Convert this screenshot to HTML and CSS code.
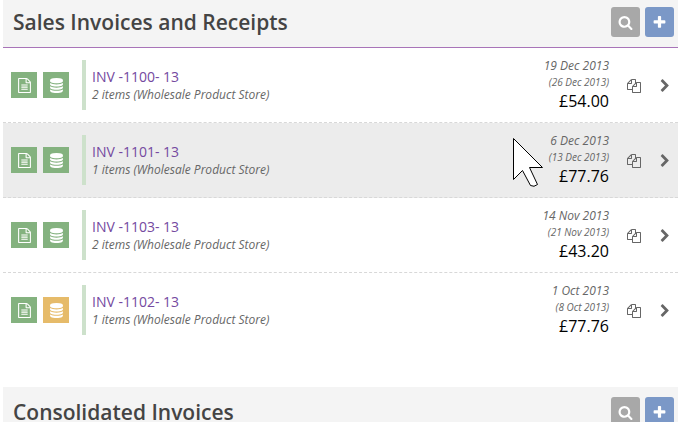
FILE: index.html
```html
<!DOCTYPE html>
<html lang="en">
<head>
  <meta charset="UTF-8" />
  <meta name="viewport" content="width=device-width, initial-scale=1.0"/>
  <title>Sales Invoices and Receipts</title>
  <link rel="stylesheet" href="styles.css">
</head>
<body>

  <!-- icon set -->
  <svg class="icon-defs" aria-hidden="true">
    <symbol id="i-file" viewBox="0 0 1792 1792"><path d="M1596 380q28 28 48 76t20 88v1152q0 40-28 68t-68 28h-1344q-40 0-68-28t-28-68v-1600q0-40 28-68t68-28h896q40 0 88 20t76 48zm-444-244v376h376q-10-29-22-41l-313-313q-12-12-41-22zm384 1528v-1024h-416q-40 0-68-28t-28-68v-416h-768v1536h1280zm-1024-864q0-14 9-23t23-9h704q14 0 23 9t9 23v64q0 14-9 23t-23 9h-704q-14 0-23-9t-9-23v-64zm736 224q14 0 23 9t9 23v64q0 14-9 23t-23 9h-704q-14 0-23-9t-9-23v-64q0-14 9-23t23-9h704zm0 256q14 0 23 9t9 23v64q0 14-9 23t-23 9h-704q-14 0-23-9t-9-23v-64q0-14 9-23t23-9h704z"/></symbol>
    <symbol id="i-coins" viewBox="0 0 1792 1792"><path d="M896 768q237 0 443-43t325-127v170q0 69-103 128t-280 93.5-385 34.5-385-34.5-280-93.5-103-128v-170q119 84 325 127t443 43zm0 768q237 0 443-43t325-127v170q0 69-103 128t-280 93.5-385 34.5-385-34.5-280-93.5-103-128v-170q119 84 325 127t443 43zm0-384q237 0 443-43t325-127v170q0 69-103 128t-280 93.5-385 34.5-385-34.5-280-93.5-103-128v-170q119 84 325 127t443 43zm0-1152q208 0 385 34.5t280 93.5 103 128v128q0 69-103 128t-280 93.5-385 34.5-385-34.5-280-93.5-103-128v-128q0-69 103-128t280-93.5 385-34.5z"/></symbol>
    <symbol id="i-copy" viewBox="0 0 1792 1792"><path d="M1696 384q40 0 68 28t28 68v1216q0 40-28 68t-68 28h-960q-40 0-68-28t-28-68v-288h-544q-40 0-68-28t-28-68v-672q0-40 20-88t48-76l408-408q28-28 76-48t88-20h416q40 0 68 28t28 68v328q68-40 128-40h416zm-544 213l-299 299h299v-299zm-640-384l-299 299h299v-299zm196 647l316-316v-416h-384v416q0 40-28 68t-68 28h-416v640h512v-256q0-40 20-88t48-76zm956 804v-1152h-384v416q0 40-28 68t-68 28h-416v640h896z"/></symbol>
    <symbol id="i-next" viewBox="0 0 1792 1792"><path d="M1363 877l-742 742q-19 19-45 19t-45-19l-166-166q-19-19-19-45t19-45l531-531-531-531q-19-19-19-45t19-45l166-166q19-19 45-19t45 19l742 742q19 19 19 45t-19 45z"/></symbol>
    <symbol id="i-search" viewBox="0 0 1792 1792"><path d="M1216 832q0-185-131.5-316.5t-316.5-131.5-316.5 131.5-131.5 316.5 131.5 316.5 316.5 131.5 316.5-131.5 131.5-316.5zm512 832q0 52-38 90t-90 38q-54 0-90-38l-343-342q-179 124-399 124-143 0-273.5-55.5t-225-150-150-225-55.5-273.5 55.5-273.5 150-225 225-150 273.5-55.5 273.5 55.5 225 150 150 225 55.5 273.5q0 220-124 399l343 343q37 37 37 90z"/></symbol>
    <symbol id="i-plus" viewBox="0 0 1792 1792"><path d="M1600 736v192q0 40-28 68t-68 28h-416v416q0 40-28 68t-68 28h-192q-40 0-68-28t-28-68v-416h-416q-40 0-68-28t-28-68v-192q0-40 28-68t68-28h416v-416q0-40 28-68t68-28h192q40 0 68 28t28 68v416h416q40 0 68 28t28 68z"/></symbol>
  </svg>

  <main class="page">
    <section class="panel">
      <header class="panel-head">
        <h2>Sales Invoices and Receipts</h2>
        <button class="btn search" aria-label="Search"><svg class="icon"><use href="#i-search"/></svg></button>
        <button class="btn add" aria-label="Add"><svg class="icon"><use href="#i-plus"/></svg></button>
      </header>

      <ul class="invoices">
        <li class="invoice">
          <span class="status"><svg class="icon"><use href="#i-file"/></svg></span>
          <span class="status"><svg class="icon"><use href="#i-coins"/></svg></span>
          <div class="info">
            <a href="#">INV -1100- 13</a>
            <span class="items">2 items (Wholesale Product Store)</span>
          </div>
          <div class="totals">
            <span class="date">19 Dec 2013</span>
            <span class="due">(26 Dec 2013)</span>
            <span class="amount">£54.00</span>
          </div>
          <button class="tool" aria-label="Copy"><svg class="icon"><use href="#i-copy"/></svg></button>
          <button class="tool" aria-label="Open"><svg class="icon"><use href="#i-next"/></svg></button>
        </li>
        <li class="invoice active">
          <span class="status"><svg class="icon"><use href="#i-file"/></svg></span>
          <span class="status"><svg class="icon"><use href="#i-coins"/></svg></span>
          <div class="info">
            <a href="#">INV -1101- 13</a>
            <span class="items">1 items (Wholesale Product Store)</span>
          </div>
          <div class="totals">
            <span class="date">6 Dec 2013</span>
            <span class="due">(13 Dec 2013)</span>
            <span class="amount">£77.76</span>
          </div>
          <button class="tool" aria-label="Copy"><svg class="icon"><use href="#i-copy"/></svg></button>
          <button class="tool" aria-label="Open"><svg class="icon"><use href="#i-next"/></svg></button>
          <svg class="pointer" viewBox="0 0 32 52" aria-hidden="true"><path d="M1.500 1.500V42.500L10.500 33.500L18.500 48.500Q22 50.500 25.500 47.500L17.500 30.500H30.500Z"/></svg>
        </li>
        <li class="invoice">
          <span class="status"><svg class="icon"><use href="#i-file"/></svg></span>
          <span class="status"><svg class="icon"><use href="#i-coins"/></svg></span>
          <div class="info">
            <a href="#">INV -1103- 13</a>
            <span class="items">2 items (Wholesale Product Store)</span>
          </div>
          <div class="totals">
            <span class="date">14 Nov 2013</span>
            <span class="due">(21 Nov 2013)</span>
            <span class="amount">£43.20</span>
          </div>
          <button class="tool" aria-label="Copy"><svg class="icon"><use href="#i-copy"/></svg></button>
          <button class="tool" aria-label="Open"><svg class="icon"><use href="#i-next"/></svg></button>
        </li>
        <li class="invoice">
          <span class="status"><svg class="icon"><use href="#i-file"/></svg></span>
          <span class="status pending"><svg class="icon"><use href="#i-coins"/></svg></span>
          <div class="info">
            <a href="#">INV -1102- 13</a>
            <span class="items">1 items (Wholesale Product Store)</span>
          </div>
          <div class="totals">
            <span class="date">1 Oct 2013</span>
            <span class="due">(8 Oct 2013)</span>
            <span class="amount">£77.76</span>
          </div>
          <button class="tool" aria-label="Copy"><svg class="icon"><use href="#i-copy"/></svg></button>
          <button class="tool" aria-label="Open"><svg class="icon"><use href="#i-next"/></svg></button>
        </li>
      </ul>
    </section>

    <section class="panel">
      <header class="panel-head">
        <h2>Consolidated Invoices</h2>
        <button class="btn search" aria-label="Search"><svg class="icon"><use href="#i-search"/></svg></button>
        <button class="btn add" aria-label="Add"><svg class="icon"><use href="#i-plus"/></svg></button>
      </header>
    </section>
  </main>

</body>
</html>
```
FILE: styles.css
```css
body {
  margin: 0;
  font-family: "Open Sans", sans-serif;
  background: #fff;
  color: #444;
  overflow-x: hidden;
}
.icon-defs {
  display: none;
}
.icon {
  display: block;
  width: 15px;
  height: 15px;
  fill: currentColor;
}
.page {
  margin: -3px 0 0 3px;
}
.panel {
  display: flow-root;
  margin-bottom: 40px;
}
.panel-head {
  display: flex;
  align-items: center;
  gap: 5px;
  padding: 10px 4px 10px 10px;
  background: #f4f4f4;
  border-bottom: 1px solid #a874b8;
}
.panel-head h2 {
  flex: 1;
  margin: 0;
  font-size: 21px;
  line-height: 30px;
  font-weight: 600;
}
.btn {
  display: flex;
  align-items: center;
  justify-content: center;
  width: 29px;
  height: 30px;
  padding: 0;
  border: none;
  border-radius: 3px;
  color: #fff;
  cursor: pointer;
}
.search {
  background: #a8a8a8;
}
.add {
  background: #7b98c7;
}
.invoices {
  list-style: none;
  margin: 0;
  padding: 0;
}
.invoice {
  position: relative;
  display: flex;
  align-items: center;
  padding: 10px 6px 10px 8px;
  border-bottom: 1px dashed #d8d8d8;
}
.invoice:last-child {
  border-bottom: none;
}
.active {
  background: #ececec;
}
.status {
  display: flex;
  align-items: center;
  justify-content: center;
  width: 26px;
  height: 26px;
  margin-right: 6px;
  background: #84b27f;
  color: #fff;
}
.pending {
  background: #e6bb6a;
}
.info {
  flex: 1;
  display: flex;
  flex-direction: column;
  justify-content: center;
  box-sizing: border-box;
  height: 50px;
  margin-left: 7px;
  padding: 2px 0 0 6px;
  border-left: 4px solid #cde1cb;
}
.info a {
  color: #7549a0;
  font-size: 14px;
  line-height: 18px;
  font-weight: 500;
  text-decoration: none;
}
.items {
  font-size: 12px;
  line-height: 18px;
  font-style: italic;
  color: #666;
}
.totals {
  display: flex;
  flex-direction: column;
  text-align: right;
  margin-right: 18px;
}
.date {
  font-size: 12px;
  line-height: 16px;
  font-style: italic;
  color: #666;
}
.due {
  font-size: 10px;
  line-height: 16px;
  font-style: italic;
  color: #666;
}
.amount {
  font-size: 16px;
  line-height: 22px;
  color: #000;
}
.tool {
  padding: 2px 0 0;
  border: none;
  background: none;
  color: #666;
  cursor: pointer;
}
.tool .icon {
  width: 14px;
  height: 14px;
}
.tool + .tool {
  margin-left: 17px;
}
.pointer {
  position: absolute;
  right: 134px;
  top: 14px;
  width: 32px;
  height: 52px;
  fill: #fff;
  stroke: #000;
}
```
